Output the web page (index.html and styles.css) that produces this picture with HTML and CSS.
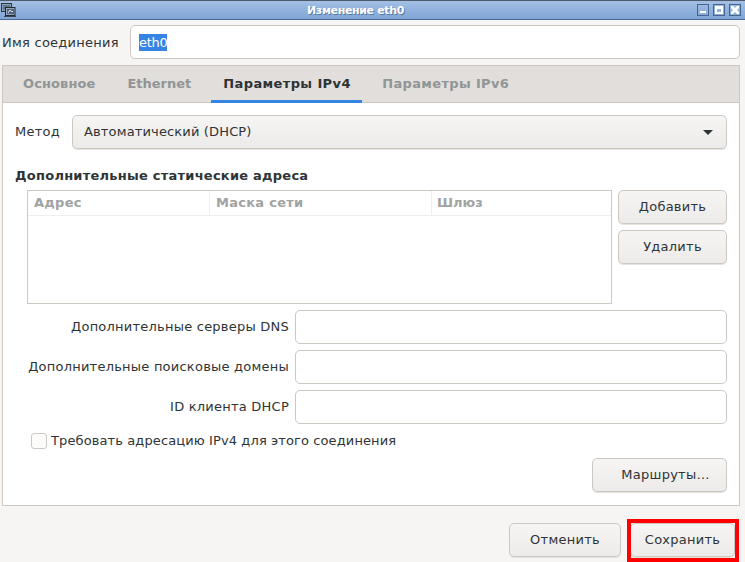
FILE: index.html
```html
<!DOCTYPE html>
<html lang="ru">
<head>
<meta charset="utf-8">
<title>Изменение eth0</title>
<link rel="stylesheet" href="styles.css">
</head>
<body>
<div class="window">
  <header class="titlebar">
    <svg class="app-icon" width="15" height="14" viewBox="0 0 15 14">
      <rect x="0.5" y="0.5" width="10" height="8" fill="#8ea2b8" stroke="#2c3540"/>
      <rect x="2" y="2" width="7" height="5" fill="#5f7690"/>
      <rect x="4.5" y="4.5" width="9.5" height="8" fill="#93a5ba" stroke="#232b34"/>
      <rect x="6" y="6" width="7" height="5" fill="#4b6280"/>
      <path d="M7 10l2-3 2 2 1-1" fill="none" stroke="#dfe6ee"/>
      <rect x="3" y="13" width="12" height="1" fill="#3a444e"/>
    </svg>
    <span class="title">Изменение eth0</span>
    <div class="win-buttons">
      <span class="win-btn"><svg width="10" height="10" viewBox="0 0 10 10"><rect x="2" y="6" width="6" height="2" fill="#fff"/></svg></span>
      <span class="win-btn"><svg width="10" height="10" viewBox="0 0 10 10"><path d="M1 1h8v8H1z M3 4v3h4V4z" fill="#fff" fill-rule="evenodd"/></svg></span>
      <span class="win-btn"><svg width="10" height="10" viewBox="0 0 10 10"><path d="M1 1h2l2 2 2-2h2v2L7 5l2 2v2H7L5 7 3 9H1V7l2-2-2-2z" fill="#fff"/></svg></span>
    </div>
  </header>

  <div class="name-row">
    <label class="name-label">Имя соединения</label>
    <div class="entry name-entry"><span class="selected">eth0</span></div>
  </div>

  <section class="notebook">
    <nav class="tabs">
      <span class="tab tab-1">Основное</span>
      <span class="tab tab-2">Ethernet</span>
      <span class="tab tab-active">Параметры IPv4</span>
      <span class="tab tab-4">Параметры IPv6</span>
    </nav>
    <div class="page">
      <div class="method-row">
        <span class="method-label">Метод</span>
        <div class="button combo">
          <span class="combo-text">Автоматический (DHCP)</span>
          <span class="arrow"></span>
        </div>
      </div>

      <h2 class="heading">Дополнительные статические адреса</h2>

      <div class="addresses">
        <div class="table">
          <div class="thead">
            <span class="th th-addr">Адрес</span>
            <span class="th th-mask">Маска сети</span>
            <span class="th th-gw">Шлюз</span>
          </div>
        </div>
        <div class="side-buttons">
          <div class="button side-btn">Добавить</div>
          <div class="button side-btn">Удалить</div>
        </div>
      </div>

      <div class="form">
        <div class="form-row"><label class="form-label">Дополнительные серверы DNS</label><div class="entry form-entry"></div></div>
        <div class="form-row"><label class="form-label">Дополнительные поисковые домены</label><div class="entry form-entry"></div></div>
        <div class="form-row"><label class="form-label">ID клиента DHCP</label><div class="entry form-entry"></div></div>
      </div>

      <div class="check-row">
        <span class="checkbox"></span>
        <span>Требовать адресацию IPv4 для этого соединения</span>
      </div>

      <div class="routes-row">
        <div class="button routes">Маршруты…</div>
      </div>
    </div>
  </section>

  <footer class="actions">
    <div class="button cancel">Отменить</div>
    <div class="button save">Сохранить</div>
  </footer>
  <div class="highlight"></div>
</div>
</body>
</html>
```

FILE: styles.css
```css
* { box-sizing: border-box; }
html, body { margin: 0; padding: 0; }
body {
  width: 745px;
  height: 562px;
  overflow: hidden;
  font-family: "DejaVu Sans", sans-serif;
  font-size: 13px;
  color: #2e3436;
  background: #f6f5f4;
}
.window { position: relative; width: 745px; height: 562px; }

.titlebar {
  position: relative;
  height: 20px;
  display: flex;
  align-items: center;
  justify-content: center;
  padding-right: 34px;
  background: linear-gradient(#a4c0e4, #7fa5d6);
  border-top: 1px solid #4c5a6c;
  border-bottom: 1px solid #4a6a96;
}
.app-icon { position: absolute; left: 1px; top: 2px; }
.title {
  color: #fff;
  font-size: 11px;
  font-weight: bold;
  letter-spacing: -0.35px;
  text-shadow: 1px 1px 0 #56779f;
}
.win-buttons {
  position: absolute;
  right: 4px;
  top: 3px;
  display: flex;
  gap: 4px;
}
.win-btn {
  width: 12px;
  height: 12px;
  border: 1px solid #44648f;
  display: block;
  line-height: 0;
}

.entry {
  height: 34px;
  background: #fff;
  border: 1px solid #cdc7c2;
  border-radius: 5px;
}
.name-row {
  display: flex;
  align-items: center;
  height: 34px;
  margin: 5px 5px 0 2px;
}
.name-label { width: 128px; font-size: 13px; letter-spacing: 0.25px; }
.name-entry {
  flex: 1;
  display: flex;
  align-items: center;
  padding-left: 8px;
  font-size: 13px;
}
.selected { background: #3584e4; color: #fff; line-height: 17px; letter-spacing: -0.3px; }

.notebook {
  margin: 6px 5px 0 2px;
  height: 441px;
  border: 1px solid #cdc7c2;
  background: #fff;
  display: flex;
  flex-direction: column;
}
.tabs {
  height: 37px;
  display: flex;
  background: #e1dedb;
  border-bottom: 1px solid #cdc7c2;
}
.tab {
  font-weight: bold;
  color: #929595;
  height: 37px;
  line-height: 36px;
  letter-spacing: 0.1px;
}
.tab-1 { margin-left: 20px; margin-right: 32px; }
.tab-2 { margin-right: 20px; letter-spacing: 0; }
.tab-active {
  color: #2e3436;
  padding: 0 12px;
  width: 151px;
  border-bottom: 3px solid #3584e4;
  letter-spacing: 0.38px;
  white-space: nowrap;
}
.tab-4 { margin-left: 20px; letter-spacing: 0.33px; }

.page { flex: 1; padding: 12px 12px 0 12px; }

.method-row { display: flex; align-items: center; height: 34px; }
.method-label { width: 57px; letter-spacing: 0.25px; line-height: 15px; padding-bottom: 2px; }

.button {
  height: 34px;
  display: flex;
  align-items: center;
  justify-content: center;
  padding-bottom: 2px;
  border: 1px solid #cdc7c2;
  border-radius: 5px;
  background: linear-gradient(#f6f5f4, #edebe9);
  box-shadow: 0 1px 0 #e5e3e0;
  letter-spacing: 0.25px;
}
.combo {
  flex: 1;
  justify-content: space-between;
  padding: 0 13px 2px 11px;
}
.combo-text { letter-spacing: 0.15px; }
.arrow {
  width: 0;
  height: 0;
  margin-top: 2px;
  border-left: 5px solid transparent;
  border-right: 5px solid transparent;
  border-top: 5px solid #2e3436;
}

.heading {
  margin: 19px 0 0 0;
  height: 22px;
  font-size: 13px;
  line-height: 16px;
  font-weight: bold;
  letter-spacing: 0.24px;
}

.addresses { display: flex; margin-left: 12px; }
.table {
  width: 585px;
  height: 114px;
  border: 1px solid #cdc7c2;
  background: #fff;
}
.thead {
  display: flex;
  height: 25px;
  border-bottom: 1px solid #f0eeec;
}
.th {
  font-weight: bold;
  color: #a0a3a3;
  line-height: 23px;
  padding-left: 6px;
  border-right: 1px solid #f0eeec;
  letter-spacing: 0.27px;
}
.th-addr { width: 182px; }
.th-mask { width: 222px; }
.th-gw { flex: 1; border-right: 0; padding-left: 5px; letter-spacing: 0; }

.side-buttons {
  margin-left: 6px;
  flex: 1;
  display: flex;
  flex-direction: column;
  gap: 6px;
}

.form {
  margin-top: 6px;
  display: flex;
  flex-direction: column;
  gap: 6px;
}
.form-row { display: flex; align-items: center; }
.form-label {
  width: 280px;
  padding: 0 6px 2px 0;
  text-align: right;
  letter-spacing: 0.23px;
  white-space: nowrap;
}
.form-entry { flex: 1; }

.check-row {
  display: flex;
  align-items: center;
  margin: 8px 0 0 16px;
  height: 17px;
  gap: 4px;
  letter-spacing: 0.11px;
}
.checkbox {
  width: 16px;
  height: 16px;
  border: 1px solid #cdc7c2;
  border-radius: 3px;
  background: #fcfcfb;
}

.routes-row { display: flex; justify-content: flex-end; margin-top: 9px; }
.routes { width: 135px; padding-left: 12px; }

.actions {
  display: flex;
  justify-content: flex-end;
  gap: 9px;
  margin: 17px 0 0 0;
  padding-right: 10px;
}
.cancel { width: 112px; }
.save { width: 105px; }

.highlight {
  position: absolute;
  left: 627px;
  top: 519px;
  width: 112px;
  height: 43px;
  border: 4px solid #fe0000;
}
```
